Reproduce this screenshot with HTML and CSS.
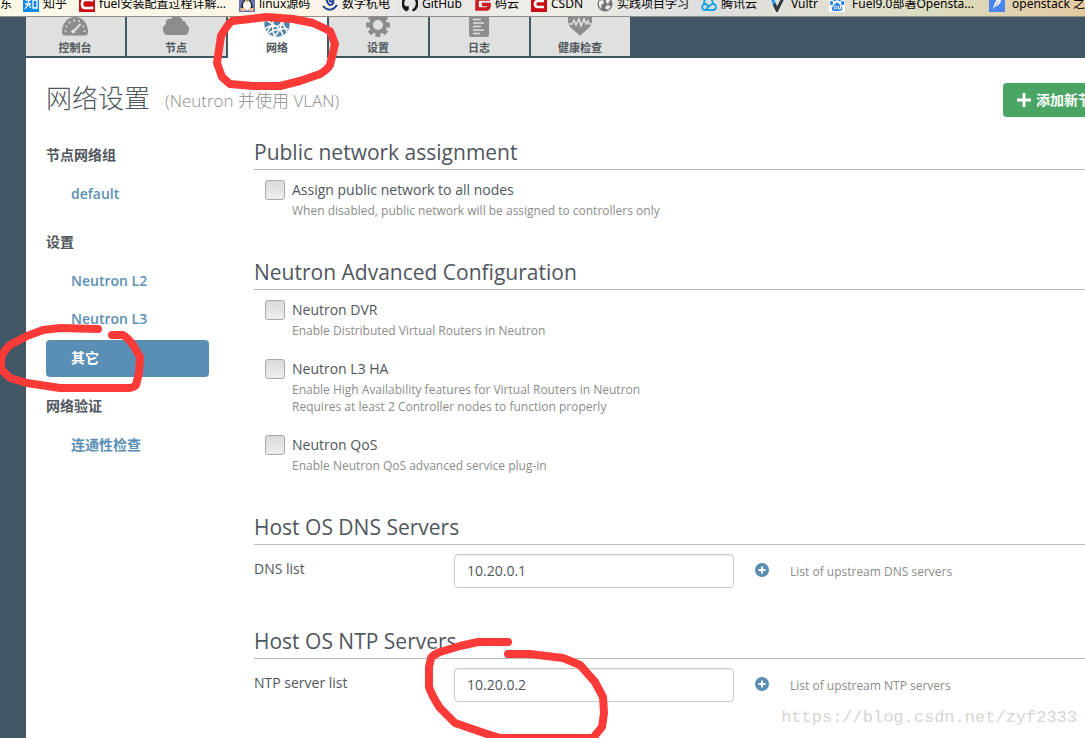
FILE: index.html
```html
<!DOCTYPE html>
<html lang="zh-CN">
<head>
<meta charset="utf-8">
<title>网络设置</title>
<link rel="stylesheet" href="styles.css">
</head>
<body>
<nav class="bookmarks" aria-label="书签">
  <div class="bookmark-row">
    <a class="bookmark" href="#">东</a>
    <a class="bookmark" href="#"><svg class="fav" viewBox="0 0 16 16"><rect width="16" height="16" fill="#0f88eb"/><path d="M4 2 3 5M3 4h5M2 8h6M5.500 4v4L2 13M6 9l2 3M10 4h4v8h-4z" fill="none" stroke="#fff" stroke-width="1.300"/></svg>知乎</a>
    <a class="bookmark" href="#"><svg class="fav" viewBox="0 0 16 16"><rect width="16" height="16" fill="#c90f12"/><path d="M13 5.500V4H6Q3 4 3 8t3 4h7v-1.500" fill="none" stroke="#fff" stroke-width="2.600"/></svg>fuel安装配置过程详解...</a>
    <a class="bookmark" href="#"><svg class="fav" viewBox="0 0 16 16"><rect width="16" height="16" fill="#6672b4"/><path d="M8 0C4 0 5 4 4 6 2 9 2 12 3 14h10c1-2 1-5-1-8-1-2 0-6-4-6z" fill="#222"/><ellipse cx="8" cy="9.500" rx="4" ry="5" fill="#fff"/><circle cx="6.500" cy="3.500" r="1" fill="#fff"/><circle cx="9.500" cy="3.500" r="1" fill="#fff"/><path d="M6 5.500h4L8 7z" fill="#f6b52c"/><path d="M1 12h5v3H2zM10 12h5l-1 3h-4z" fill="#f6b989"/></svg>linux源码</a>
    <a class="bookmark" href="#"><svg class="fav" viewBox="0 0 16 16"><path d="M4 2C6 10 9 11 12 6M8 1c-1 5 1 6 4 3M1 10c4 5 10 5 14-1" fill="none" stroke="#1c3f9c" stroke-width="2"/></svg>数字杭电</a>
    <a class="bookmark" href="#"><svg class="fav" viewBox="0 0 16 16"><path d="M5.500 14.500C2 13 1 10 1 7.500 1 3 4 1 8 1s7 2 7 6.500c0 2.500-1 5.500-4.500 7M5.500 14v-2.500c-2.500.500-3-1-3.500-1.500" fill="none" stroke="#151515" stroke-width="2.400"/></svg>GitHub</a>
    <a class="bookmark" href="#"><svg class="fav" viewBox="0 0 16 16"><path d="M15 3H5Q2 3 2 6v7h9q3 0 3-3V8.500H7" fill="none" stroke="#c71d23" stroke-width="3.600"/></svg>码云</a>
    <a class="bookmark" href="#"><svg class="fav" viewBox="0 0 16 16"><rect width="16" height="16" fill="#ca0c16"/><path d="M13 5H7Q4 5 4 8t3 3h6" fill="none" stroke="#fff" stroke-width="2.600"/></svg>CSDN</a>
    <a class="bookmark" href="#"><svg class="fav" viewBox="0 0 16 16"><circle cx="8" cy="8" r="7.500" fill="#777"/><path d="M2 5l4-1 1 3-3 2 1 4-3-3zM9 2l4 2-2 4-2-2zM10 9l4 1-3 4-3-2z" fill="#eee"/></svg>实践项目学习</a>
    <a class="bookmark" href="#"><svg class="fav" viewBox="0 0 16 16"><path d="M8 11 5 8C0 8 0 14 4 14h8c4 0 4-6 0-6-1 0-2 .500-3 1.500L5 13M3 8C2 1 12 0 12 8" fill="none" stroke="#14a3e8" stroke-width="1.800"/></svg>腾讯云</a>
    <a class="bookmark" href="#"><svg class="fav" viewBox="0 0 16 16"><path d="M1 2l5 12" stroke="#1b96ec" stroke-width="3"/><path d="M3 8l3 6 6-12" fill="none" stroke="#30383c" stroke-width="3"/></svg>Vultr</a>
    <a class="bookmark bookmark-wide" href="#"><svg class="fav" viewBox="0 0 16 16"><rect width="16" height="16" fill="#fff"/><g fill="#2f87ee"><ellipse cx="2.500" cy="7" rx="1.700" ry="2.200"/><ellipse cx="6" cy="3" rx="1.700" ry="2.300"/><ellipse cx="10.500" cy="3" rx="1.700" ry="2.300"/><ellipse cx="13.700" cy="7" rx="1.700" ry="2.200"/><path d="M8 6.500c-2 0-2 2-4 3.500s-1.500 5 1 5h6c3 0 3-3.500 1-5S10 6.500 8 6.500z"/></g><circle cx="6.500" cy="11.500" r="1.400" fill="none" stroke="#fff"/><path d="M9.500 10v3h2v-3" fill="none" stroke="#fff"/></svg>Fuel9.0部署Opensta...</a>
    <a class="bookmark bookmark-wide" href="#"><svg class="fav" viewBox="0 0 16 16"><rect width="16" height="16" fill="#4c84ee"/><path d="M4 14C5 7 8 2 12 1c1 4-1 8-6 10z" fill="#fff"/><path d="M4 14l6-9" stroke="#4c84ee" stroke-width=".700"/></svg>openstack 之</a>
  </div>
</nav>

<div class="app">
  <nav class="tabs" aria-label="集群">
    <a class="tab" href="#">
      <svg class="tab-icon" viewBox="0 0 28 20"><path d="M3 18.500Q1 18 1 14.500C1 6 7 0 14 0s13 6 13 14.500q0 3.500-2 4z" fill="#8b8c8c"/><g fill="#dfe1e0"><circle cx="4.500" cy="14" r="1"/><circle cx="5.500" cy="9.500" r="1"/><circle cx="8.500" cy="5.500" r="1"/><circle cx="13" cy="3.500" r="1"/><circle cx="18" cy="4" r="1"/><circle cx="22.500" cy="9.500" r="1"/><circle cx="23.500" cy="14" r="1"/></g><path d="M12.500 14.500 19 7.500" stroke="#dfe1e0" stroke-width="2" stroke-linecap="round"/><circle cx="12.300" cy="14.600" r="2" fill="#dfe1e0"/></svg>
      <span>控制台</span></a>
    <a class="tab" href="#">
      <svg class="tab-icon" viewBox="0 0 28 20"><path d="M6 18C3 18 1 16 1 12.500S3 8 4 7C3 3 6 1 9 2c2-4 10-4 12 2 2 0 3 1.500 3 3.500 2 .500 3 2.500 3 5 0 3.500-2 5.500-5 5.500z" fill="#8b8c8c"/></svg>
      <span>节点</span></a>
    <a class="tab active" href="#" aria-current="page">
      <svg class="tab-icon" viewBox="0 0 28 20"><circle cx="14" cy="7" r="12.700" fill="#4f86a5"/><path d="M1 3q6 1 9 5t9-2 9-3M10 8Q5 11 4 17M10 8q8 2 10 11M10 8Q9 2 11-3M19 6Q17 2 13-1M19 6q4 5 5 9M10 8q-1 6 2 12M1 12q3-2 9-4M19 6q-2 8-8 14M6 16q8-5 19-4" fill="none" stroke="#fff" stroke-width="1.500"/><circle cx="10" cy="8" r="1.700" fill="#fff"/><circle cx="19" cy="6" r="1.700" fill="#fff"/></svg>
      <span>网络</span></a>
    <a class="tab" href="#">
      <svg class="tab-icon" viewBox="0 0 28 20"><g stroke="#8b8c8c" stroke-width="5"><path d="M14-4v24M2 8h24M5.500-.500l17 17M22.500-.500l-17 17"/></g><circle cx="14" cy="8" r="9" fill="#8b8c8c"/><circle cx="14" cy="8" r="5" fill="#dfe1e0"/></svg>
      <span>设置</span></a>
    <a class="tab" href="#">
      <svg class="tab-icon" viewBox="0 0 28 20"><path d="M4-4h20v22q0 2-2 2H6q-2 0-2-2z" fill="#8b8c8c"/><path d="M8 2.500h8M8 6h11M8 9.500h8M8 13h11M8 16.500h7" stroke="#dfe1e0" stroke-width="1.300"/></svg>
      <span>日志</span></a>
    <a class="tab" href="#">
      <svg class="tab-icon" viewBox="0 0 28 20"><path d="M2-3h24v8c0 5-5 7-12 14C7 12 2 10 2 5z" fill="#8b8c8c"/><path d="M2 7h4l2-4 2 5 3-6 2 7 3-7 2 5 2-3 1 3h3" fill="none" stroke="#dfe1e0" stroke-width="1.500"/></svg>
      <span>健康检查</span></a>
  </nav>

  <main class="page">
    <header class="page-head">
      <h1>网络设置</h1>
      <span class="subtitle">(Neutron 并使用 VLAN)</span>
      <button class="add-button" type="button"><svg class="plus" viewBox="0 0 14 14"><path d="M7 0v14M0 7h14" stroke="#fff" stroke-width="3"/></svg>添加新节点组</button>
    </header>

    <div class="columns">
      <nav class="side" aria-label="网络设置">
        <h2>节点网络组</h2>
        <a class="side-link" href="#">default</a>
        <h2>设置</h2>
        <a class="side-link" href="#">Neutron L2</a>
        <a class="side-link" href="#">Neutron L3</a>
        <a class="side-link active" href="#">其它</a>
        <h2>网络验证</h2>
        <a class="side-link" href="#">连通性检查</a>
      </nav>

      <form class="settings">
        <section>
          <h3>Public network assignment</h3>
          <div class="check-list">
            <div class="check-row">
              <input id="assign" type="checkbox">
              <div><label for="assign">Assign public network to all nodes</label>
              <p>When disabled, public network will be assigned to controllers only</p></div>
            </div>
          </div>
        </section>
        <section>
          <h3>Neutron Advanced Configuration</h3>
          <div class="check-list">
            <div class="check-row">
              <input id="dvr" type="checkbox">
              <div><label for="dvr">Neutron DVR</label>
              <p>Enable Distributed Virtual Routers in Neutron</p></div>
            </div>
            <div class="check-row">
              <input id="l3ha" type="checkbox">
              <div><label for="l3ha">Neutron L3 HA</label>
              <p>Enable High Availability features for Virtual Routers in Neutron<br>Requires at least 2 Controller nodes to function properly</p></div>
            </div>
            <div class="check-row">
              <input id="qos" type="checkbox">
              <div><label for="qos">Neutron QoS</label>
              <p>Enable Neutron QoS advanced service plug-in</p></div>
            </div>
          </div>
        </section>
        <section>
          <h3>Host OS DNS Servers</h3>
          <div class="field-row">
            <label for="dns">DNS list</label>
            <input id="dns" type="text" value="10.20.0.1">
            <button class="round-add" type="button" aria-label="添加"><svg viewBox="0 0 14 14"><circle cx="7" cy="7" r="7" fill="#5a8fb5"/><path d="M7 3.500v7M3.500 7h7" stroke="#fff" stroke-width="2"/></svg></button>
            <p>List of upstream DNS servers</p>
          </div>
        </section>
        <section>
          <h3>Host OS NTP Servers</h3>
          <div class="field-row">
            <label for="ntp">NTP server list</label>
            <input id="ntp" type="text" value="10.20.0.2">
            <button class="round-add" type="button" aria-label="添加"><svg viewBox="0 0 14 14"><circle cx="7" cy="7" r="7" fill="#5a8fb5"/><path d="M7 3.500v7M3.500 7h7" stroke="#fff" stroke-width="2"/></svg></button>
            <p>List of upstream NTP servers</p>
          </div>
        </section>
      </form>
    </div>
  </main>
</div>

<svg class="marks" viewBox="0 0 1085 738" aria-hidden="true">
  <path d="M267 17 250 19 232 21Q227 25 221 36L217 63 222 77 230 84 253 86H280L300 81 320 74Q327 70 330 65L335 44 330 31 313 23 293 19 267 17"/>
  <path d="M98 329 60 328 43 330 27 336 10 345Q3 351 1 359V369L10 378 27 383 60 388H127Q134 388 136 385L139 373 140 357 133 345Q127 337 123 335H112"/>
  <path d="M508 642H478L460 646 440 652Q433 655 431 658L429 667V687Q432 696 440 708L455 723 487 734 500 738H593L602 727 604 713 603 697 595 682 580 665 563 658 530 654H508"/>
</svg>
<div class="watermark">https://blog.csdn.net/zyf2333</div>
</body>
</html>
```

FILE: styles.css
```css
* { box-sizing: border-box; }

body {
  margin: 0;
  min-height: 100vh;
  display: flex;
  flex-direction: column;
  position: relative;
  overflow: hidden;
  background: #415766;
  color: #50565d;
  font: 14px/20px "Open Sans", "Noto Sans CJK SC", sans-serif;
}

h1, h2, h3, p { margin: 0; }
a { color: inherit; text-decoration: none; }
button { font: inherit; border: 0; cursor: pointer; }

/* bookmark strip, scrolled partly out of view */
.bookmarks {
  height: 17px;
  overflow: hidden;
  border-bottom: 1px solid #918d80;
  background: linear-gradient(90deg, #fdf8e8 0%, #fbf6e6 28%, #e6e4e4 38%, #f0eee6 50%, #dededf 64%, #e2e0d6 74%, #dcdcc0 86%, #e3c9a0 100%);
}

.bookmark-row {
  margin-top: -4px;
  display: grid;
  grid-template-columns: 23px 56px 160px 83px 80px 73px 56px 66px 104px 70px 58px 160px 1fr;
  color: #000;
  font: 12px/16px "Noto Sans", "Noto Sans CJK SC", sans-serif;
}

.bookmark {
  display: flex;
  gap: 4px;
  white-space: nowrap;
}

.bookmark-wide { gap: 7px; }
.fav { width: 16px; height: 16px; flex: none; }

.app {
  flex: 1;
  display: flex;
  flex-direction: column;
  padding-left: 26px;
}

.tabs {
  display: flex;
  gap: 2px;
}

.tab {
  width: 99px;
  height: 39px;
  display: flex;
  flex-direction: column;
  align-items: center;
  gap: 3px;
  padding-right: 1px;
  background: #dfe1e0;
  font-size: 11px;
  line-height: 16px;
  font-weight: bold;
}

.tab.active {
  height: 41px;
  background: #fff;
}

.tab-icon { width: 28px; height: 20px; flex: none; }

.page {
  flex: 1;
  background: #fff;
  padding: 25px 0 0 20px;
}

.page-head {
  display: flex;
  align-items: center;
  height: 34px;
}

h1 {
  padding-bottom: 4px;
  font-size: 26px;
  line-height: 34px;
  font-weight: 300;
}

.subtitle {
  margin-left: 15px;
  padding-top: 1px;
  color: #8c8c8c;
  font-size: 17px;
  font-weight: 300;
}

.add-button {
  flex: none;
  display: flex;
  align-items: center;
  gap: 5px;
  height: 34px;
  margin-left: auto;
  margin-right: -49px;
  padding: 0 14px;
  border-radius: 4px;
  background: #4aa564;
  color: #fff;
  font-weight: bold;
}

.plus { width: 14px; height: 14px; }

.columns {
  display: flex;
  gap: 45px;
  padding-top: 21px;
}

.side {
  width: 163px;
  flex: none;
  display: flex;
  flex-direction: column;
  gap: 1px;
  padding-top: 7px;
}

.side h2 {
  font-size: 14px;
  line-height: 20px;
  margin-bottom: 11px;
}

.side-link + h2 { margin-top: 17px; }
.side-link.active + h2 { margin-top: 18px; }

.side-link {
  padding: 7px 25px 10px;
  border-radius: 4px;
  color: #5a8fb5;
  font-weight: 600;
}

.side-link.active {
  padding: 8px 25px 9px;
  background: #5a8fb5;
  color: #fff;
}

.settings {
  flex: 1;
  display: flex;
  flex-direction: column;
  gap: 39px;
}

h3 {
  padding-bottom: 3px;
  border-bottom: 1px solid #b9b9b9;
  font-size: 21px;
  line-height: 28px;
  font-weight: 400;
}

.check-list {
  display: flex;
  flex-direction: column;
  gap: 20px;
  padding: 10px 0 0 11px;
}

.check-row {
  display: flex;
  gap: 7px;
}

.check-row label { display: block; }

.check-row input {
  appearance: none;
  flex: none;
  width: 20px;
  height: 20px;
  margin: 0;
  border: 1px solid #a9a9a9;
  border-radius: 3px;
  background: linear-gradient(#d9dadb, #eee);
}

.settings p {
  color: #8c8c8c;
  font-size: 12px;
  line-height: 17px;
}

.check-row p { margin-top: 2px; }

.field-row {
  display: flex;
  align-items: center;
  padding-top: 9px;
}

.field-row label {
  width: 200px;
  padding-bottom: 4px;
}

.field-row input {
  width: 280px;
  height: 34px;
  padding: 0 12px 2px;
  border: 1px solid #c8c8c8;
  border-radius: 4px;
  background: #fff;
  color: #50565d;
  font: inherit;
  box-shadow: inset 0 1px 1px #eee;
}

.field-row p { padding-top: 1px; }

.round-add {
  width: 14px;
  height: 14px;
  margin: 0 21px 2px;
  padding: 0;
  background: none;
}

.round-add svg { display: block; width: 14px; height: 14px; }

/* hand-drawn annotations over the page */
.marks {
  position: absolute;
  left: 0;
  top: 0;
  width: 1085px;
  height: 738px;
  pointer-events: none;
  fill: none;
  stroke: #fc3a38;
  stroke-width: 8;
  stroke-linecap: round;
  stroke-linejoin: round;
}

.watermark {
  position: absolute;
  right: 8px;
  bottom: 8px;
  color: #d6d6d2;
  font: 17px/24px "Liberation Mono", monospace;
}
```
